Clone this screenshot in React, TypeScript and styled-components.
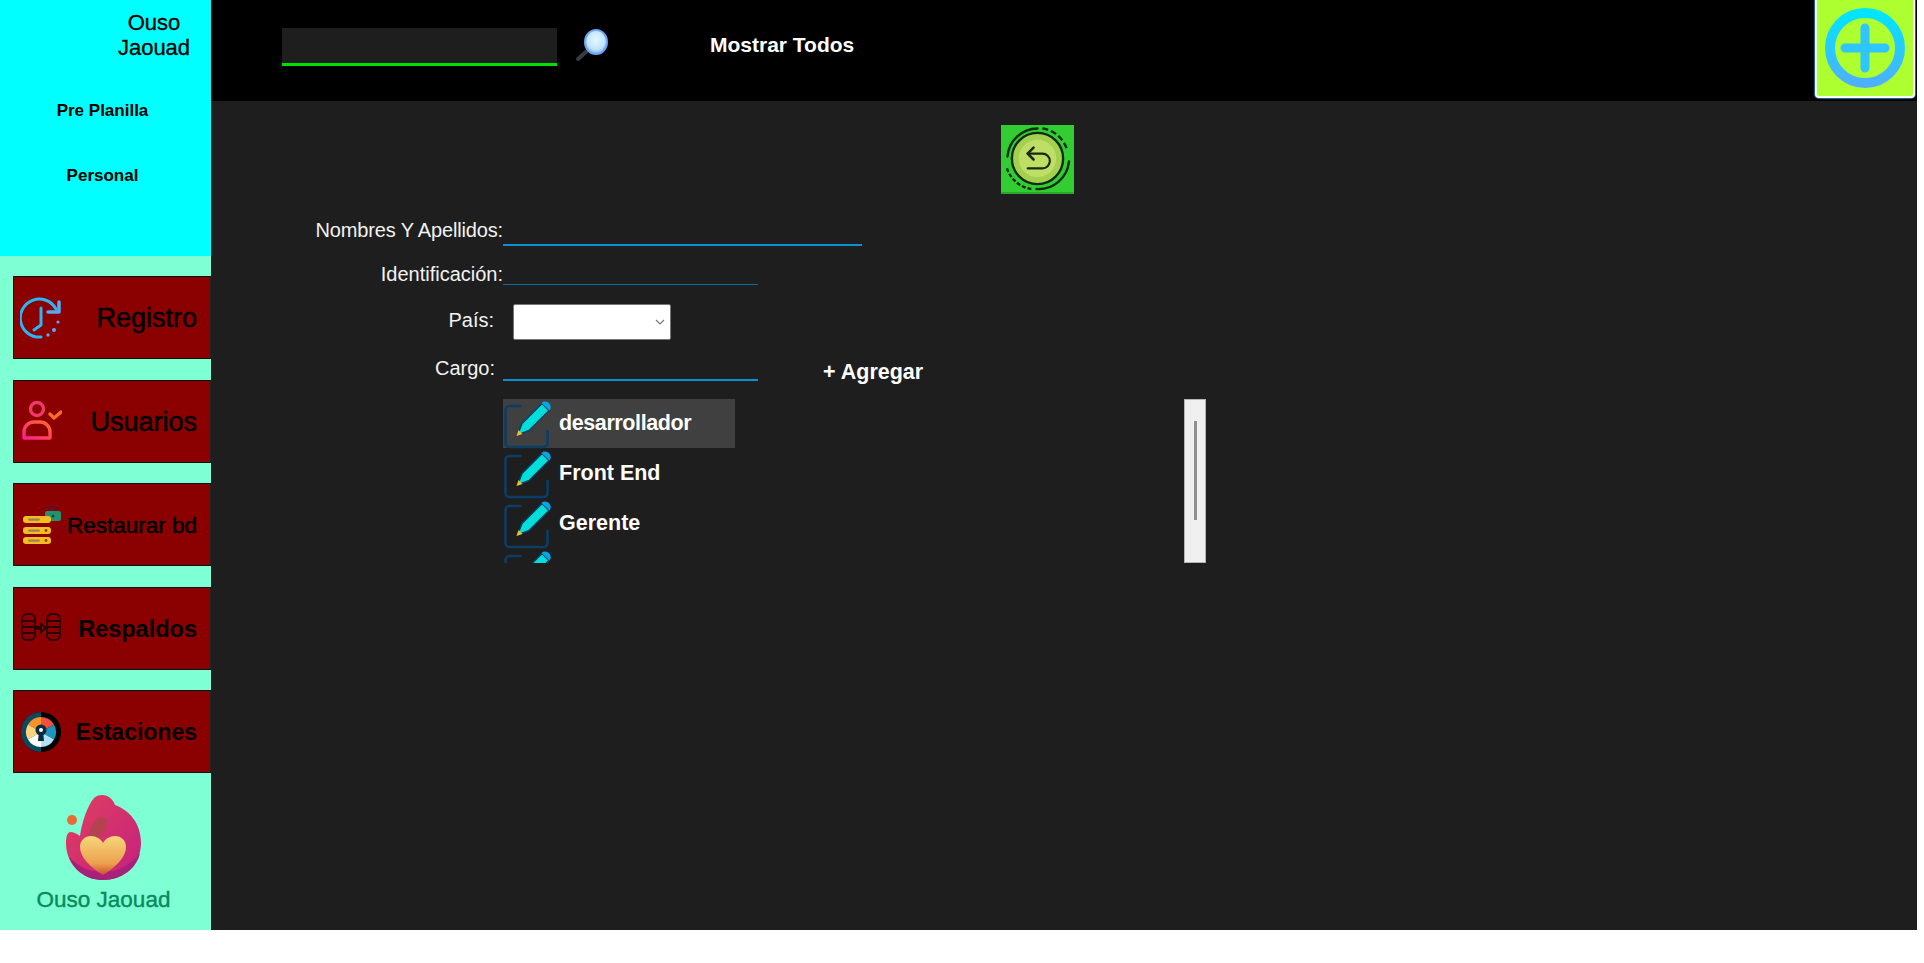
import React from 'react'
import styled, { createGlobalStyle } from 'styled-components'

const GlobalStyle = createGlobalStyle`
    html, body {
        margin     : 0;
        padding    : 0;
        background : #ffffff;
    }
    body {
        font-family : "Liberation Sans", Arial, sans-serif;
    }
`

const Page = styled.div`
    display : flex;
    width   : 1917px;
    height  : 930px;
`

const Sidebar = styled.aside`
    display        : flex;
    flex-direction : column;
    flex           : 0 0 211px;
    background     : #7fffd4;
`

const TopMenu = styled.div`
    display        : flex;
    flex-direction : column;
    height         : 256px;
    background     : #00ffff;
    color          : #000;
`

const UserName = styled.div`
    align-self  : flex-end;
    width       : 100px;
    margin      : 10px 7px 0 0;
    font-size   : 22px;
    line-height : 25px;
    text-align  : center;
    -webkit-text-stroke : 0.3px #000;
`

const MenuLink = styled.a<{ $top: number }>`
    display     : block;
    width       : 205px;
    font-size   : 17px;
    font-weight : 700;
    line-height : 20px;
    text-align  : center;
    margin-top  : ${(p) => p.$top}px;
`

const NavList = styled.nav`
    display        : flex;
    flex-direction : column;
    gap            : 20.5px;
    padding        : 20px 0 0 13px;
`

const NavButton = styled.button<{ $size: number; $bold?: boolean }>`
    display         : flex;
    align-items     : center;
    justify-content : space-between;
    height          : 83px;
    padding         : 0 13px 0 6px;
    background      : #8b0000;
    border          : 1px solid #111;
    border-right    : 1px solid #222;
    color           : #000;
    font-family     : inherit;
    font-size       : ${(p) => p.$size}px;
    font-weight     : ${(p) => p.$bold ? 700 : 400};
    -webkit-text-stroke : ${(p) => p.$bold ? 0 : 0.5}px #000;
    cursor          : pointer;

    svg {
        flex   : 0 0 auto;
        width  : 42px;
        height : 42px;
    }
`

const NavLabel = styled.span`
    padding-top : 2px;
`

const Brand = styled.div`
    display        : flex;
    flex-direction : column;
    align-items    : center;
    width          : 207px;
    margin-top     : 22px;

    svg {
        width  : 80px;
        height : 88px;
    }
`

const BrandName = styled.div`
    margin-top  : 5px;
    color       : #0a8a5c;
    font-size   : 22.5px;
    font-weight : 400;
    line-height : 24px;
    -webkit-text-stroke : 0.4px #0a8a5c;
`

const Content = styled.main`
    display        : flex;
    flex-direction : column;
    flex           : 1;
    min-width      : 0;
    background     : #1e1e1e;
`

const Header = styled.header`
    display     : flex;
    align-items : flex-start;
    height      : 101px;
    flex        : 0 0 101px;
    background  : #000;
    padding     : 0 2px 0 71px;
`

const SearchInput = styled.input`
    box-sizing    : border-box;
    width         : 275px;
    height        : 38px;
    margin-top    : 28px;
    background    : #1e1e1e;
    border        : none;
    border-bottom : 3px solid #00e000;
    outline       : none;
    color         : #fff;
`

const SearchIcon = styled.svg`
    width  : 38px;
    height : 38px;
    margin : 26px 0 0 16px;
`

const ShowAll = styled.a`
    margin      : 33px 0 0 99px;
    color       : #fff;
    font-size   : 21px;
    font-weight : 700;
    line-height : 24px;
`

const AddButton = styled.button`
    display         : flex;
    align-items     : center;
    justify-content : center;
    box-sizing      : border-box;
    width           : 100px;
    height          : 98px;
    margin-left     : auto;
    padding         : 0;
    background      : #adff2f;
    border          : 2px solid #fff;
    border-top      : none;
    border-radius   : 0 0 4px 4px;
    box-shadow      : 0 0 1px 1px #1d6fa8;

    svg {
        width  : 84px;
        height : 84px;
    }
`

const Body = styled.div`
    display        : flex;
    flex-direction : column;
    padding-top    : 24px;
`

const BackButton = styled.button`
    display       : block;
    align-self    : flex-start;
    width         : 73px;
    height        : 69px;
    margin        : 0 0 24px 790px;
    padding       : 0;
    background    : #32cd32;
    border        : none;
    border-bottom : 2px solid #2aa82a;

    svg {
        display : block;
        width   : 73px;
        height  : 67px;
    }
`

const FormRow = styled.div<{ $h: number }>`
    display     : flex;
    align-items : flex-start;
    height      : ${(p) => p.$h}px;
`

const Label = styled.label<{ $w?: number; $top?: number; $spacing?: number }>`
    flex           : 0 0 ${(p) => p.$w ?? 292}px;
    margin-top     : ${(p) => p.$top ?? 0}px;
    color          : #f2f2f2;
    font-size      : 20px;
    line-height    : 24px;
    text-align     : right;
    letter-spacing : ${(p) => p.$spacing ?? 0}px;
`

const TextInput = styled.input<{ $w: number; $h?: number; $left?: number; $line: string }>`
    box-sizing    : border-box;
    width         : ${(p) => p.$w}px;
    height        : ${(p) => p.$h ?? 28}px;
    margin-left   : ${(p) => p.$left ?? 0}px;
    background    : transparent;
    border        : none;
    border-bottom : ${(p) => p.$line};
    outline       : none;
    color         : #fff;
`

const CountrySelect = styled.div`
    position      : relative;
    box-sizing    : border-box;
    width         : 158px;
    height        : 36px;
    margin-left   : 19px;
    background    : #fff;
    border        : 1px solid #767676;
    border-radius : 2px;

    svg {
        position : absolute;
        right    : 4px;
        top      : 13px;
        width    : 12px;
        height   : 8px;
    }
`

const AddLink = styled.a`
    margin-left : 65px;
    margin-top  : 8px;
    color       : #fff;
    font-size   : 21.5px;
    font-weight : 700;
    line-height : 26px;
`

const ListArea = styled.div`
    display     : flex;
    align-items : flex-start;
    margin-left : 292px;
`

const ChargeList = styled.div`
    width    : 232px;
    height   : 164px;
    overflow : hidden;
`

const ChargeRow = styled.div<{ $active?: boolean }>`
    display        : flex;
    align-items    : center;
    height         : 49px;
    margin-bottom  : 1px;
    background     : ${(p) => p.$active ? '#404040' : 'transparent'};
    color          : #fff;
    font-size      : 21.5px;
    font-weight    : 700;
    letter-spacing : ${(p) => p.$active ? -0.4 : 0}px;

    svg {
        flex         : 0 0 auto;
        width        : 51px;
        height       : 50px;
        margin-right : 5px;
    }
`

const ScrollTrack = styled.div`
    display         : flex;
    justify-content : center;
    box-sizing      : border-box;
    width           : 22px;
    height          : 164px;
    margin-left     : 449px;
    padding-top     : 21px;
    background      : #f0f0f0;
    border          : 1px solid #b5b5b5;
`

const ScrollThumb = styled.div`
    width      : 3px;
    height     : 99px;
    background : #8f8f8f;
`

const ClockIcon = () => (
    <svg viewBox="0 0 42 42" fill="none" stroke="#29b6f6" strokeWidth="3" strokeLinecap="round" strokeLinejoin="round">
        <path d="M36 12A19 19 0 1 0 21 40" />
        <path d="M21 11v17l-7 5" />
        <path d="M39 5v10H28" stroke="#5aa9f0" strokeWidth="3.500" />
        <circle cx="28" cy="38" r="1.700" fill="#5aa9f0" stroke="none" />
        <circle cx="34" cy="33" r="2" fill="#5aa9f0" stroke="none" />
        <circle cx="38" cy="25" r="1.600" fill="#5aa9f0" stroke="none" />
    </svg>
)

const UserIcon = () => (
    <svg viewBox="0 0 42 42" fill="none" strokeWidth="3.400" strokeLinecap="round" strokeLinejoin="round">
        <defs>
            <linearGradient id="userGrad" x1="0" y1="1" x2="1" y2="0">
                <stop offset="0" stopColor="#ff1f8f" />
                <stop offset="1" stopColor="#ff6a2a" />
            </linearGradient>
        </defs>
        <circle cx="17" cy="9" r="6.500" stroke="#f0386b" />
        <path d="M4 38v-6c0-6 5-10 10-10h6c5 0 10 4 10 10v6z" stroke="url(#userGrad)" />
        <path d="M30 14l4 4 7-6" stroke="#ff6a2a" />
    </svg>
)

const ServerIcon = () => (
    <svg viewBox="0 0 42 42">
        <path d="M37 7a4.500 4.500 0 0 0-9 0" fill="none" stroke="#5a1030" strokeWidth="2" />
        <rect x="25" y="7" width="16" height="10" rx="2" fill="#22936e" />
        <circle cx="33" cy="12" r="1.500" fill="#0c4a3a" />
        <rect x="3" y="12" width="28" height="7" rx="3" fill="#f5bd1f" />
        <rect x="3" y="23" width="28" height="7" rx="3" fill="#f5bd1f" />
        <rect x="3" y="33" width="28" height="7" rx="3" fill="#f5bd1f" />
        <rect x="8" y="14.500" width="12" height="2.200" rx="1.100" fill="#a08060" />
        <rect x="8" y="25.500" width="12" height="2.200" rx="1.100" fill="#a08060" />
        <rect x="8" y="35.500" width="12" height="2.200" rx="1.100" fill="#a08060" />
        <circle cx="26" cy="26.500" r="1.400" fill="#7a4a20" />
        <circle cx="26" cy="36.500" r="1.400" fill="#7a4a20" />
    </svg>
)

const BackupIcon = () => (
    <svg viewBox="0 0 42 42" fill="none" stroke="#2a0000" strokeWidth="1.800">
        <rect x="2" y="7" width="13" height="26" rx="5" />
        <path d="M2 14h13M2 20h13M2 26h13" />
        <rect x="27" y="7" width="13" height="26" rx="5" />
        <path d="M27 14h13M27 20h13M27 26h13" />
        <path d="M15 20h6v-3l5 4-5 4v-3h-6" />
    </svg>
)

const GaugeIcon = () => (
    <svg viewBox="0 0 42 42">
        <circle cx="21" cy="21" r="20" fill="#000" />
        <path d="M21 1A20 20 0 0 0 21 41z" fill="#0b4a5c" />
        <path d="M21 6a15 15 0 0 1 13 7.500l-13 7.500z" fill="#f0503c" />
        <path d="M21 6a15 15 0 0 0-13 7.500l13 7.500z" fill="#f5922a" />
        <path d="M8 13.500a15 15 0 0 0 0 15l13-7.500z" fill="#fcd27a" />
        <path d="M34 13.500a15 15 0 0 1 0 15l-13-7.500z" fill="#1f93bd" />
        <path d="M8 28.500a15 15 0 0 0 13 7.500V21z" fill="#ffffff" />
        <path d="M34 28.500a15 15 0 0 1-13 7.500V21z" fill="#aee3f5" />
        <circle cx="21" cy="19" r="5.500" fill="#0a2a40" />
        <path d="M19 20h4l1 10h-6z" fill="#0a2a40" />
        <circle cx="21" cy="19" r="2" fill="#fff" />
    </svg>
)

const BrandLogo = () => (
    <svg viewBox="0 0 80 88">
        <defs>
            <linearGradient id="flame" x1="0" y1="0" x2="1" y2="1">
                <stop offset="0" stopColor="#e0405f" />
                <stop offset="1" stopColor="#c4207f" />
            </linearGradient>
            <linearGradient id="heart" x1="0" y1="0" x2="0" y2="1">
                <stop offset="0" stopColor="#f6d67a" />
                <stop offset="0.700" stopColor="#eda14e" />
                <stop offset="1" stopColor="#c8502f" />
            </linearGradient>
        </defs>
        <circle cx="8" cy="25" r="5" fill="#e86a35" />
        <path d="M38 0c6 0 11 4 13 10 14 5 26 18 26 38 0 21-17 37-38 37C18 85 2 69 2 48c0-6 1-10 4-11 4 0 7 2 10 4C18 26 24 10 30 3c2-2 5-3 8-3z" fill="url(#flame)" />
        <path d="M39 85C24 85 10 76 5 62c10 10 21 15 34 15 14 0 24-6 34-15l3-4c-3 15-18 27-37 27z" fill="#a8207a" />
        <path d="M24 44c2-14 8-22 14-22 6 0 6 8 2 14-4 6-10 9-16 8z" fill="#b5434f" />
        <path d="M39 80C26 72 16 62 16 52c0-7 5-11 11-11 5 0 10 3 12 7 2-4 7-7 12-7 6 0 11 4 11 11 0 10-10 20-23 28z" fill="url(#heart)" />
    </svg>
)

const MagnifierIcon = () => (
    <SearchIcon viewBox="0 0 38 38">
        <defs>
            <radialGradient id="lens" cx="0.500" cy="0.400" r="0.600">
                <stop offset="0" stopColor="#e6f7ff" />
                <stop offset="0.700" stopColor="#bfe4ff" />
                <stop offset="1" stopColor="#6fa8f5" />
            </radialGradient>
        </defs>
        <path d="M15 24L5 33" stroke="#3a3a40" strokeWidth="4" strokeLinecap="round" />
        <ellipse cx="23" cy="16" rx="11" ry="12" fill="url(#lens)" stroke="#6ea6f0" strokeWidth="2" />
    </SearchIcon>
)

const PlusIcon = () => (
    <svg viewBox="0 0 84 84" fill="none">
        <defs>
            <linearGradient id="plusGrad" x1="0" y1="0" x2="0" y2="1">
                <stop offset="0" stopColor="#00e5ff" />
                <stop offset="1" stopColor="#4db0ff" />
            </linearGradient>
        </defs>
        <circle cx="42" cy="42" r="35" stroke="url(#plusGrad)" strokeWidth="10" />
        <path d="M42 22v40M22 42h40" stroke="#2fc6ff" strokeWidth="9" strokeLinecap="round" />
    </svg>
)

const BackIcon = () => (
    <svg viewBox="0 0 74 68" fill="none">
        <circle cx="37" cy="34" r="26" fill="#a3d14f" stroke="#122a12" strokeWidth="2.400" />
        <circle cx="37" cy="34" r="19" fill="#bede66" />
        <path d="M37 3.500A31 31 0 0 0 6.500 32" stroke="#0e2a10" strokeWidth="2.400" strokeLinecap="round" />
        <path d="M42 3.500A31 31 0 0 1 67 25" stroke="#0e2a10" strokeWidth="2.400" strokeDasharray="6 3" />
        <path d="M69 37A31 31 0 0 1 36 65" stroke="#0e2a10" strokeWidth="2.400" strokeLinecap="round" />
        <path d="M6 44A31 31 0 0 0 31 65" stroke="#0e2a10" strokeWidth="2.400" strokeDasharray="4 2" />
        <path d="M27 29h15a7.500 7.500 0 0 1 0 15H27" stroke="#1a2a10" strokeWidth="2.200" strokeLinecap="round" />
        <path d="M33 23l-6 6 6 6" stroke="#1a2a10" strokeWidth="2.600" strokeLinecap="round" strokeLinejoin="round" />
    </svg>
)

const Chevron = () => (
    <svg viewBox="0 0 12 8" fill="none" stroke="#777" strokeWidth="1.200">
        <path d="M2 2l4 4 4-4" />
    </svg>
)

const EditIcon = () => (
    <svg viewBox="0 0 50 50" fill="none">
        <path d="M17 7H6a4 4 0 0 0-4 4v33a4 4 0 0 0 4 4h34a4 4 0 0 0 4-4V32" stroke="#0c3d66" strokeWidth="2.600" strokeLinecap="round" />
        <path d="M18.500 24.500l20-20 7 7-20 20-11.500 4.500z" fill="#00e0d8" stroke="#0c3d66" strokeWidth="1.500" strokeLinejoin="round" />
        <path d="M15 31l4 4-6 2z" fill="#f2bd2c" />
        <path d="M38 4a5.500 5.500 0 0 1 8 7.500z" fill="#06a5e6" />
    </svg>
)

const navItems = [
    { label: 'Registro', size: 27, bold: false, icon: <ClockIcon /> },
    { label: 'Usuarios', size: 27, bold: false, icon: <UserIcon /> },
    { label: 'Restaurar bd', size: 22.5, bold: false, icon: <ServerIcon /> },
    { label: 'Respaldos', size: 23.5, bold: true, icon: <BackupIcon /> },
    { label: 'Estaciones', size: 23, bold: true, icon: <GaugeIcon /> },
]

const charges = ['desarrollador', 'Front End', 'Gerente', '']

const App = () => {
    return (
        <Page>
            <GlobalStyle />
            <Sidebar>
                <TopMenu>
                    <UserName>Ouso Jaouad</UserName>
                    <MenuLink $top={41}>Pre Planilla</MenuLink>
                    <MenuLink $top={45}>Personal</MenuLink>
                </TopMenu>
                <NavList>
                    {navItems.map((item) => (
                        <NavButton key={item.label} $size={item.size} $bold={item.bold}>
                            {item.icon}
                            <NavLabel>{item.label}</NavLabel>
                        </NavButton>
                    ))}
                </NavList>
                <Brand>
                    <BrandLogo />
                    <BrandName>Ouso Jaouad</BrandName>
                </Brand>
            </Sidebar>
            <Content>
                <Header>
                    <SearchInput />
                    <MagnifierIcon />
                    <ShowAll>Mostrar Todos</ShowAll>
                    <AddButton><PlusIcon /></AddButton>
                </Header>
                <Body>
                    <BackButton><BackIcon /></BackButton>
                    <FormRow $h={44}>
                        <Label $spacing={-0.15}>Nombres Y Apellidos:</Label>
                        <TextInput $w={359} $line="2px solid #0a8fd0" />
                    </FormRow>
                    <FormRow $h={42}>
                        <Label>Identificación:</Label>
                        <TextInput $w={255} $h={23} $line="1px solid #0a6f9f" />
                    </FormRow>
                    <FormRow $h={47}>
                        <Label $w={283} $top={4}>País:</Label>
                        <CountrySelect><Chevron /></CountrySelect>
                    </FormRow>
                    <FormRow $h={48}>
                        <Label $w={284} $top={5}>Cargo:</Label>
                        <TextInput $left={8} $w={255} $h={30} $line="2px solid #0a8fd0" />
                        <AddLink>+ Agregar</AddLink>
                    </FormRow>
                    <ListArea>
                        <ChargeList>
                            {charges.map((name, i) => (
                                <ChargeRow key={i} $active={i === 0}>
                                    <EditIcon />
                                    <span>{name}</span>
                                </ChargeRow>
                            ))}
                        </ChargeList>
                        <ScrollTrack><ScrollThumb /></ScrollTrack>
                    </ListArea>
                </Body>
            </Content>
        </Page>
    )
}

export default App
